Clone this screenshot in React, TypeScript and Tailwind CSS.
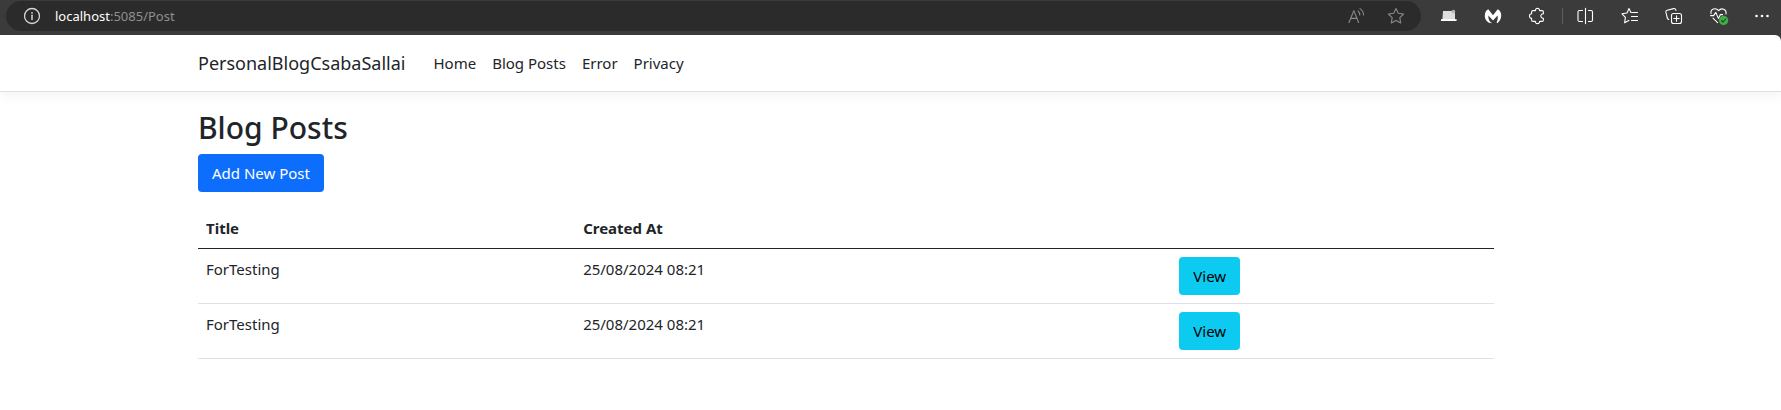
import React from "react";

const posts = [
  { id: 1, title: "ForTesting", createdAt: "25/08/2024 08:21" },
  { id: 2, title: "ForTesting", createdAt: "25/08/2024 08:21" },
];

const navLinks = ["Home", "Blog Posts", "Error", "Privacy"];

type IconProps = { children: React.ReactNode; className?: string };

function Icon({ children, className = "" }: IconProps) {
  return (
    <svg
      width="20"
      height="20"
      viewBox="0 0 20 20"
      fill="none"
      stroke="currentColor"
      strokeWidth="1.1"
      strokeLinecap="round"
      strokeLinejoin="round"
      aria-hidden="true"
      className={`shrink-0 ${className}`}
    >
      {children}
    </svg>
  );
}

function ToolButton({ label, narrow = false, children }: { label: string; narrow?: boolean; children: React.ReactNode }) {
  return (
    <button type="button" aria-label={label} className={`flex h-8 items-center justify-center text-white ${narrow ? "w-10" : "w-11"}`}>
      {children}
    </button>
  );
}

function BrowserBar() {
  return (
    <div className="flex h-[35px] items-start bg-[#3b3b3b] pl-1.5">
      <div className="mt-px flex h-[30px] flex-1 items-center rounded-full bg-[#2b2b2b] pr-[15px] pl-4">
        <button type="button" aria-label="Site information" className="text-[#d6d6d6]">
          <Icon>
            <circle cx="10" cy="10" r="7.5" strokeWidth="1.3" />
            <path d="M10 9.2V13.4" strokeWidth="1.5" />
            <circle cx="10" cy="6.8" r="0.9" fill="currentColor" stroke="none" />
          </Icon>
        </button>
        <span className="ml-[13px] flex-1 text-[13px] text-[#8f8f8f]">
          <span className="text-white">localhost</span>:5085/Post
        </span>
        <div className="flex items-center gap-5 text-[#8a8a8a]">
          <button type="button" aria-label="Read aloud">
            <Icon>
              <path d="M3 16.5 7.8 4.6 12.6 16.5M4.7 12.4H10.9" />
              <path d="M12 4.8Q13.8 6.4 13.8 9M14 2.6Q17.4 5 17.6 9" />
            </Icon>
          </button>
          <button type="button" aria-label="Add to favorites">
            <Icon>
              <path d="M10 2.5 12.3 7.3 17.6 8 13.8 11.7 14.7 17 10 14.5 5.3 17 6.2 11.7 2.4 8 7.7 7.3Z" />
            </Icon>
          </button>
        </div>
      </div>
      <div className="ml-1.5 flex items-center">
        <ToolButton label="Laptop extension">
          <Icon>
            <path d="M4 5H16V14H3.4Z" fill="#dedede" stroke="none" />
            <path d="M2 13.2H17.6V15H2Z" fill="#fff" stroke="none" />
            <circle cx="14.4" cy="5.6" r="1.8" fill="#b5b5b5" stroke="none" />
          </Icon>
        </ToolButton>
        <ToolButton label="Malwarebytes">
          <Icon>
            <path
              d="M5.3 3.3 10 9.2 14.7 3.3C17 4.2 18.3 6.6 18.2 9.8 18.1 13 16.6 15.6 14.3 17.2L13.6 16.2C14.7 14.4 15 12.2 14.6 9.4L10 14.6 5.4 9.4C5 12.8 6.2 15.2 9 17.3 4.6 17.1 1.9 14.1 1.8 10 1.7 6.8 3 4.4 5.3 3.3Z"
              fill="#fff"
              stroke="none"
            />
          </Icon>
        </ToolButton>
        <ToolButton label="Extensions">
          <Icon>
            <path d="M6 4.6H8.4C8.2 1.6 12.8 1.6 12.6 4.6H15Q16.4 4.6 16.4 6V7.8C13 7.4 13 12.6 16.4 12.2V14Q16.4 15.4 15 15.4H12.6C12.8 18.4 8.2 18.4 8.4 15.4H6Q4.6 15.4 4.6 14V12.2C1.8 12.4 1.8 7.6 4.6 7.8V6Q4.6 4.6 6 4.6Z" />
          </Icon>
        </ToolButton>
        <div className="flex w-1.5 justify-center">
          <div className="h-4 w-px bg-[#5e5e5e]" />
        </div>
        <ToolButton label="Split screen">
          <Icon className="mr-1">
            <path d="M7.5 4.5H4.5Q3 4.5 3 6V14Q3 15.5 4.5 15.5H7.5M13.5 4.5H16Q17.5 4.5 17.5 6V14Q17.5 15.5 16 15.5H13.5" />
            <path d="M10.5 2.4V17.6" />
          </Icon>
        </ToolButton>
        <ToolButton label="Favorites">
          <Icon className="mr-0.5">
            <path d="M11.6 6.5 10.9 6.4 9 2.6 7 7 2 7.8 5.4 11.4 4.6 16.8 8.8 14.4M12.5 6.5H17.5M11.5 10.5H17.5M11.5 14.5H17.5" />
          </Icon>
        </ToolButton>
        <ToolButton label="Collections">
          <Icon className="mr-0.5">
            <rect x="7.5" y="7.5" width="10" height="10" rx="2" />
            <path d="M12.5 9.8V15.2M9.8 12.5H15.2" />
            <path d="M4.8 13.4Q3.6 13.2 3.3 12L1.9 6.2Q1.6 4.6 3.1 4.2L9.6 2.6Q11.4 2.3 12 4.4" />
          </Icon>
        </ToolButton>
        <ToolButton label="Browser essentials">
          <Icon>
            <path d="M2 7.6C1.2 2.8 6.8 1.2 9.6 4.6 12.4 1.2 17.8 3.2 17 8M4 12.2 8.6 16.6" />
            <path d="M1.6 9.6H4.6L6.8 6.4 9.4 12.4 11.4 8.6H13.6" />
            <circle cx="14.6" cy="14.4" r="4.6" fill="#3fae49" stroke="none" />
            <path d="M12.6 14.6 14 16 16.7 13" stroke="#17451b" />
          </Icon>
        </ToolButton>
        <ToolButton label="Settings and more" narrow>
          <Icon>
            <circle cx="5.5" cy="10" r="1.3" fill="currentColor" stroke="none" />
            <circle cx="11" cy="10" r="1.3" fill="currentColor" stroke="none" />
            <circle cx="16.5" cy="10" r="1.3" fill="currentColor" stroke="none" />
          </Icon>
        </ToolButton>
      </div>
    </div>
  );
}

function Container({ children }: { children: React.ReactNode }) {
  return (
    <div className="pr-[89px]">
      <div className="mx-auto max-w-[1320px] px-3">{children}</div>
    </div>
  );
}

export default function App() {
  return (
    <div className="flex min-h-screen flex-col bg-[#3b3b3b] font-['Noto_Sans','Open_Sans',sans-serif] text-[15px] leading-6 text-[#212529]">
      <BrowserBar />
      <div className="flex-1 overflow-hidden rounded-tr-md bg-white">
        <header className="mb-4 border-b border-[#dee2e6] shadow-[0_4px_12px_rgba(0,0,0,0.05)]">
          <Container>
            <nav className="flex h-14 items-center">
              <a href="#" className="mr-5 text-lg">
                PersonalBlogCsabaSallai
              </a>
              <ul className="flex">
                {navLinks.map((label) => (
                  <li key={label}>
                    <a href="#" className="block px-2 py-2">
                      {label}
                    </a>
                  </li>
                ))}
              </ul>
            </nav>
          </Container>
        </header>
        <Container>
          <main className="pb-3">
            <h1 className="mb-1.5 text-3xl leading-10 font-medium">Blog Posts</h1>
            <a href="#" className="inline-block rounded-sm bg-[#0d6efd] px-3.5 py-[7px] align-top text-white">
              Add New Post
            </a>
            <table className="mt-4 w-full table-fixed border-separate border-spacing-0 text-left">
              <colgroup>
                <col className="w-[29.1%]" />
                <col className="w-[46%]" />
                <col />
              </colgroup>
              <thead>
                <tr>
                  <th className="border-b border-[#212529] p-2 font-bold">Title</th>
                  <th className="border-b border-[#212529] p-2 font-bold">Created At</th>
                  <th className="border-b border-[#212529] p-2" aria-label="Actions" />
                </tr>
              </thead>
              <tbody>
                {posts.map((post) => (
                  <tr key={post.id} className="align-top">
                    <td className="border-b border-[#dee2e6] p-2">{post.title}</td>
                    <td className="border-b border-[#dee2e6] p-2">{post.createdAt}</td>
                    <td className="border-b border-[#dee2e6] p-2">
                      <a href="#" className="inline-block rounded-sm bg-[#0dcaf0] px-3.5 py-[7px] align-top text-black">
                        View
                      </a>
                    </td>
                  </tr>
                ))}
              </tbody>
            </table>
          </main>
        </Container>
      </div>
    </div>
  );
}
